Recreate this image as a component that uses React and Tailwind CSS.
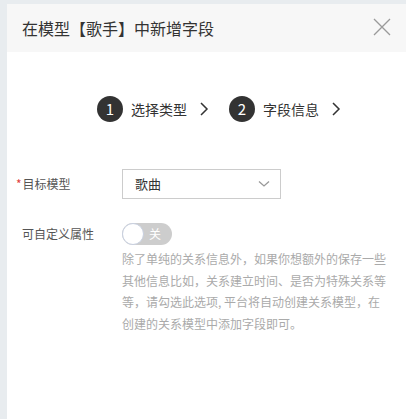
export default function App(){
    return (
        <div className="w-[406px] h-[419px] bg-[#e8ecef] pt-[4px] pl-[7px] overflow-hidden" style={{fontFamily:'"Noto Sans CJK SC","Noto Sans",sans-serif'}}>
            <div className="h-full bg-white flex flex-col">
                <div className="h-[48px] bg-[#f7f7f7] flex items-center justify-between pl-[15px] pr-[14px]">
                    <span className="text-[16px] text-[#333]">在模型【歌手】中新增字段</span>
                    <svg width="20" height="20" viewBox="0 0 20 20" className="mt-[-2px]">
                        <path d="M2 2 L18 18 M18 2 L2 18" stroke="#9a9a9a" strokeWidth="1.3" fill="none"/>
                    </svg>
                </div>

                <div className="flex items-center pl-[90px] mt-[44px] h-[26px]">
                    <div className="w-[26px] h-[26px] rounded-full bg-[#333] text-white text-[15px] flex items-center justify-center">1</div>
                    <span className="ml-[8px] text-[14px] text-[#333]">选择类型</span>
                    <svg width="10" height="14" viewBox="0 0 10 14" className="ml-[12px]">
                        <path d="M2 1 L8 7 L2 13" stroke="#333" strokeWidth="1.5" fill="none"/>
                    </svg>
                    <div className="ml-[20px] w-[26px] h-[26px] rounded-full bg-[#333] text-white text-[15px] flex items-center justify-center">2</div>
                    <span className="ml-[8px] text-[14px] text-[#333]">字段信息</span>
                    <svg width="10" height="14" viewBox="0 0 10 14" className="ml-[12px]">
                        <path d="M2 1 L8 7 L2 13" stroke="#333" strokeWidth="1.5" fill="none"/>
                    </svg>
                </div>

                <div className="flex items-center mt-[47px] h-[30px]">
                    <div className="w-[115px] pl-[9px] text-[12px] text-[#555]">
                        <span className="text-[#e04040] mr-[1px]">*</span>目标模型
                    </div>
                    <div className="w-[159px] h-[30px] border border-[#ccc] flex items-center justify-between pl-[12px] pr-[10px]">
                        <span className="text-[13px] text-[#333]">歌曲</span>
                        <svg width="12" height="8" viewBox="0 0 12 8">
                            <path d="M1 1.5 L6 6 L11 1.5" stroke="#999" strokeWidth="1.3" fill="none"/>
                        </svg>
                    </div>
                </div>

                <div className="flex mt-[24px]">
                    <div className="w-[115px] pl-[15px] text-[12px] text-[#555] leading-[22px]">可自定义属性</div>
                    <div className="flex flex-col">
                        <div className="w-[50px] h-[22px] rounded-full bg-[#cdcdcd] relative flex items-center">
                            <div className="w-[22px] h-[22px] rounded-full bg-white border border-[#c8d0e0]"></div>
                            <span className="ml-[5px] text-[12px] text-white">关</span>
                        </div>
                        <p className="mt-[3px] w-[268px] text-[12px] leading-[21.5px] text-[#aaa]">
                            除了单纯的关系信息外，如果你想额外的保存一些其他信息比如，关系建立时间、是否为特殊关系等等，请勾选此选项, 平台将自动创建关系模型，在创建的关系模型中添加字段即可。
                        </p>
                    </div>
                </div>
            </div>
        </div>
    )
}
